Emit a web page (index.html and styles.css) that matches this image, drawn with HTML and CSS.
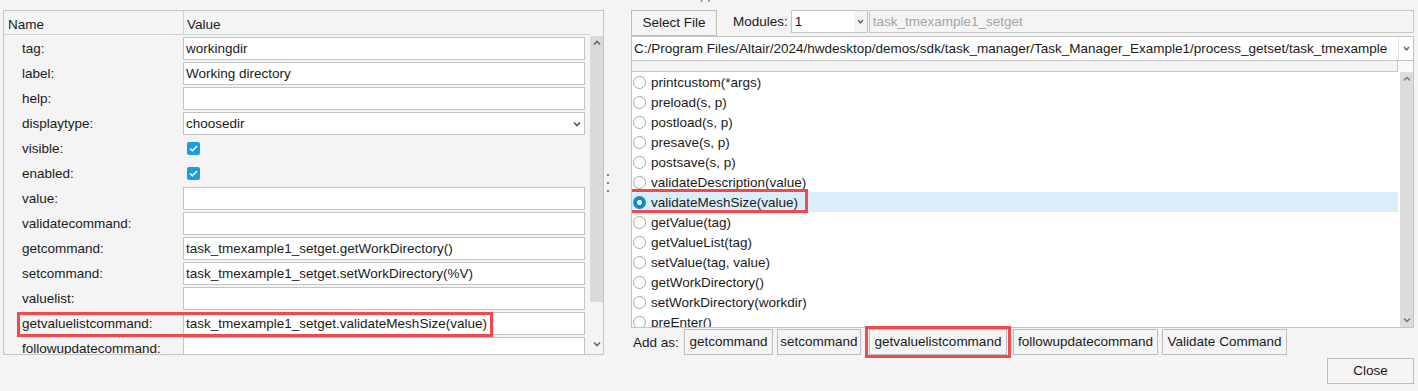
FILE: index.html
```html
<!DOCTYPE html>
<html>
<head>
<meta charset="utf-8">
<link rel="stylesheet" href="styles.css">
</head>
<body>
<div class="title"><span>Application</span></div>
<div class="main">
  <div class="left">
    <div class="thead">
      <div class="th name">Name</div>
      <div class="th value">Value</div>
    </div>
    <div class="tbody">
      <div class="rows">
        <div class="row"><div class="lbl">tag:</div><div class="val"><div class="input">workingdir</div></div></div>
        <div class="row"><div class="lbl">label:</div><div class="val"><div class="input">Working directory</div></div></div>
        <div class="row"><div class="lbl">help:</div><div class="val"><div class="input"></div></div></div>
        <div class="row"><div class="lbl">displaytype:</div><div class="val"><div class="input select"><span class="stext">choosedir</span><svg class="chev" width="8" height="6" viewBox="0 0 8 6"><polyline points="1,1.5 4,4.5 7,1.5" fill="none" stroke="#555" stroke-width="1.6"/></svg></div></div></div>
        <div class="row"><div class="lbl">visible:</div><div class="val"><span class="chk"><svg width="9" height="7" viewBox="0 0 9 7"><polyline points="1,3.5 3.4,5.8 8,1" fill="none" stroke="#fff" stroke-width="1.5"/></svg></span></div></div>
        <div class="row"><div class="lbl">enabled:</div><div class="val"><span class="chk"><svg width="9" height="7" viewBox="0 0 9 7"><polyline points="1,3.5 3.4,5.8 8,1" fill="none" stroke="#fff" stroke-width="1.5"/></svg></span></div></div>
        <div class="row"><div class="lbl">value:</div><div class="val"><div class="input"></div></div></div>
        <div class="row"><div class="lbl">validatecommand:</div><div class="val"><div class="input"></div></div></div>
        <div class="row"><div class="lbl">getcommand:</div><div class="val"><div class="input">task_tmexample1_setget.getWorkDirectory()</div></div></div>
        <div class="row"><div class="lbl">setcommand:</div><div class="val"><div class="input">task_tmexample1_setget.setWorkDirectory(%V)</div></div></div>
        <div class="row"><div class="lbl">valuelist:</div><div class="val"><div class="input"></div></div></div>
        <div class="row"><div class="lbl">getvaluelistcommand:</div><div class="val"><div class="input">task_tmexample1_setget.validateMeshSize(value)</div></div><span class="annot annot-left"></span></div>
        <div class="row"><div class="lbl">followupdatecommand:</div><div class="val"><div class="input"></div></div></div>
      </div>
      <div class="vscroll">
        <div class="thumb"><svg width="8" height="6" viewBox="0 0 8 6"><polyline points="1,4.5 4,1.5 7,4.5" fill="none" stroke="#666" stroke-width="1.6"/></svg></div>
        <div class="sdown"><svg width="8" height="6" viewBox="0 0 8 6"><polyline points="1,1.5 4,4.5 7,1.5" fill="none" stroke="#666" stroke-width="1.6"/></svg></div>
      </div>
    </div>
  </div>
  <div class="splitter"><i></i><i></i><i></i></div>
  <div class="right">
    <div class="r-top">
      <button class="btn selfile">Select File</button>
      <span class="mod-lbl">Modules:</span>
      <div class="combo mod"><span class="ctext">1</span><span class="carrow"><svg width="7" height="5" viewBox="0 0 7 5"><polyline points="1,1 3.5,3.8 6,1" fill="none" stroke="#666" stroke-width="1.5"/></svg></span></div>
      <div class="field dis">task_tmexample1_setget</div>
    </div>
    <div class="combo path"><span class="ctext">C:/Program Files/Altair/2024/hwdesktop/demos/sdk/task_manager/Task_Manager_Example1/process_getset/task_tmexample</span><span class="carrow"><svg width="7" height="5" viewBox="0 0 7 5"><polyline points="1,1 3.5,3.8 6,1" fill="none" stroke="#666" stroke-width="1.5"/></svg></span></div>
    <div class="list">
      <div class="list-head"><div class="lh-main"></div><div class="lh-corner"></div></div>
      <div class="list-body">
        <div class="items">
          <div class="item"><span class="radio"></span><span>printcustom(*args)</span></div>
          <div class="item"><span class="radio"></span><span>preload(s, p)</span></div>
          <div class="item"><span class="radio"></span><span>postload(s, p)</span></div>
          <div class="item"><span class="radio"></span><span>presave(s, p)</span></div>
          <div class="item"><span class="radio"></span><span>postsave(s, p)</span></div>
          <div class="item"><span class="radio"></span><span>validateDescription(value)</span></div>
          <div class="item sel"><span class="radio on"></span><span>validateMeshSize(value)</span><span class="annot annot-item"></span></div>
          <div class="item"><span class="radio"></span><span>getValue(tag)</span></div>
          <div class="item"><span class="radio"></span><span>getValueList(tag)</span></div>
          <div class="item"><span class="radio"></span><span>setValue(tag, value)</span></div>
          <div class="item"><span class="radio"></span><span>getWorkDirectory()</span></div>
          <div class="item"><span class="radio"></span><span>setWorkDirectory(workdir)</span></div>
          <div class="item"><span class="radio"></span><span>preEnter()</span></div>
        </div>
        <div class="lscroll">
          <svg width="8" height="6" viewBox="0 0 8 6"><polyline points="1,4.5 4,1.5 7,4.5" fill="none" stroke="#777" stroke-width="1.5"/></svg>
          <svg width="8" height="6" viewBox="0 0 8 6"><polyline points="1,1.5 4,4.5 7,1.5" fill="none" stroke="#777" stroke-width="1.5"/></svg>
        </div>
      </div>
    </div>
    <div class="addrow">
      <span class="addlbl">Add as:</span>
      <button class="btn b-get">getcommand</button>
      <button class="btn b-set">setcommand</button>
      <span class="hl"><button class="btn b-gvl">getvaluelistcommand</button></span>
      <button class="btn b-fol">followupdatecommand</button>
      <button class="btn b-val">Validate Command</button>
    </div>
  </div>
</div>
<div class="footer"><button class="btn close">Close</button></div>
</body>
</html>
```

FILE: styles.css
```css
* { box-sizing: border-box; }
html, body { margin: 0; padding: 0; }
body {
  width: 1418px;
  height: 391px;
  overflow: hidden;
  background: #f4f4f4;
  font-family: "Liberation Sans", Arial, sans-serif;
  font-size: 13.5px;
  color: #1a1a1a;
}
.title { height: 10px; overflow: hidden; padding-left: 691px; color: #777; }
.title span { display: block; line-height: 13px; margin-top: -12px; }

.main { display: flex; height: 345px; padding-left: 3px; }

/* left property table */
.left {
  width: 601px;
  border: 1px solid #c4c4c4;
  display: flex;
  flex-direction: column;
}
.thead { display: flex; height: 24px; flex: none; }
.th { height: 24px; border-bottom: 1px solid #cfcfcf; line-height: 27px; }
.th.name { width: 179px; padding-left: 4px; }
.th.value { width: 407px; border-left: 1px solid #d2d2d2; padding-left: 3px; }
.tbody { flex: 1; min-height: 0; display: flex; overflow: hidden; }
.rows { width: 586px; padding-top: 1px; overflow: hidden; }
.row { display: flex; align-items: center; height: 25px; position: relative; flex: none; }
.lbl { width: 179px; padding-left: 18px; white-space: nowrap; }
.val { width: 402px; display: flex; align-items: center; }
.input {
  width: 100%;
  height: 23px;
  border: 1px solid #c3c3c3;
  background: #fff;
  line-height: 21px;
  padding-left: 2px;
  white-space: nowrap;
  overflow: hidden;
}
.input.select { display: flex; align-items: center; }
.stext { flex: 1; }
.chev { margin-right: 3px; }
.chk {
  width: 13px;
  height: 13px;
  margin-left: 4px;
  background: #1c9de0;
  border-radius: 2px;
  display: flex;
  align-items: center;
  justify-content: center;
}
.vscroll { width: 13px; margin-top: 1px; display: flex; flex-direction: column; }
.thumb {
  height: 266px;
  background: #dadada;
  display: flex;
  justify-content: center;
  padding-top: 4px;
}
.thumb svg, .sdown svg { display: block; }
.sdown { margin-top: auto; height: 15px; display: flex; justify-content: center; padding-top: 2px; }

.annot { position: absolute; border: 3px solid #ef4a50; pointer-events: none; }
.annot-left { left: 13px; top: 1px; width: 476px; height: 25px; }

/* splitter */
.splitter {
  width: 27px;
  display: flex;
  flex-direction: column;
  justify-content: center;
  gap: 6px;
  padding-left: 3px;
}
.splitter i { display: block; width: 2px; height: 2px; background: #8a8a8a; }

/* right panel */
.right { width: 783px; display: flex; flex-direction: column; }
.r-top { display: flex; height: 26px; align-items: flex-start; flex: none; }
.btn {
  font: inherit;
  color: inherit;
  background: #f4f4f4;
  border: 1px solid #bdbdbd;
  border-radius: 0;
  height: 26px;
  margin: 0;
  padding: 0;
  line-height: 24px;
  white-space: nowrap;
  text-align: center;
}
.selfile { width: 86px; }
.mod-lbl { margin-left: 16px; margin-right: 3px; line-height: 23px; }
.combo { display: flex; background: #fff; border: 1px solid #c3c3c3; }
.combo.mod { width: 77px; height: 23px; }
.ctext { flex: 1; padding-left: 3px; line-height: 21px; white-space: nowrap; overflow: hidden; }
.carrow { display: flex; align-items: center; justify-content: center; }
.combo.mod .carrow { width: 13px; background: #f4f4f4; }
.field.dis {
  flex: 1;
  height: 23px;
  margin-left: 1px;
  border: 1px solid #c8c8c8;
  background: #f4f4f4;
  color: #a5a5a5;
  line-height: 21px;
  padding-left: 3px;
}
.combo.path { height: 25px; flex: none; }
.combo.path .ctext { padding-left: 2px; line-height: 23px; }
.combo.path .carrow { width: 15px; border-left: 1px solid #e4e4e4; }

.list {
  margin-top: -1px;
  height: 268px;
  flex: none;
  border: 1px solid #c3c3c3;
  display: flex;
  flex-direction: column;
  background: #fff;
}
.list-head { display: flex; height: 11px; flex: none; }
.lh-main { width: 766px; background: #f4f4f4; border-bottom: 1px solid #c8c8c8; border-right: 1px solid #c8c8c8; }
.lh-corner { flex: 1; background: #fafafa; }
.list-body { flex: 1; min-height: 0; display: flex; }
.items { width: 766px; overflow: hidden; }
.item {
  height: 20px;
  display: flex;
  align-items: center;
  padding-left: 1px;
  position: relative;
  white-space: nowrap;
}
.item.sel { background: #d9eefa; }
.radio {
  width: 13px;
  height: 13px;
  border: 1px solid #a6a6a6;
  border-radius: 50%;
  background: #fff;
  margin-right: 5px;
  flex: none;
}
.radio.on {
  border: none;
  background: radial-gradient(circle, #fff 0 2.3px, #0d8ad6 2.9px);
}
.annot-item { left: -5px; top: -3px; width: 181px; height: 24px; }
.lscroll {
  width: 13px;
  margin-left: 2px;
  background: #dcdcdc;
  display: flex;
  flex-direction: column;
  justify-content: space-between;
  align-items: center;
  padding: 4px 0 4px;
}
.lscroll svg { display: block; }

.addrow { display: flex; align-items: center; gap: 4px; height: 27px; padding-top: 1px; padding-left: 2px; flex: none; }
.addlbl { width: 47px; }
.b-get { width: 89px; }
.b-set { width: 84px; }
.b-gvl { width: 138px; }
.b-fol { width: 145px; }
.b-val { width: 125px; }
.hl { border: 3px solid #ef4a50; padding: 0 1px; height: 32px; display: flex; align-items: center; margin-right: -2px; }

.footer { display: flex; justify-content: flex-end; padding-right: 4px; margin-top: 3px; }
.close { width: 87px; }
```
